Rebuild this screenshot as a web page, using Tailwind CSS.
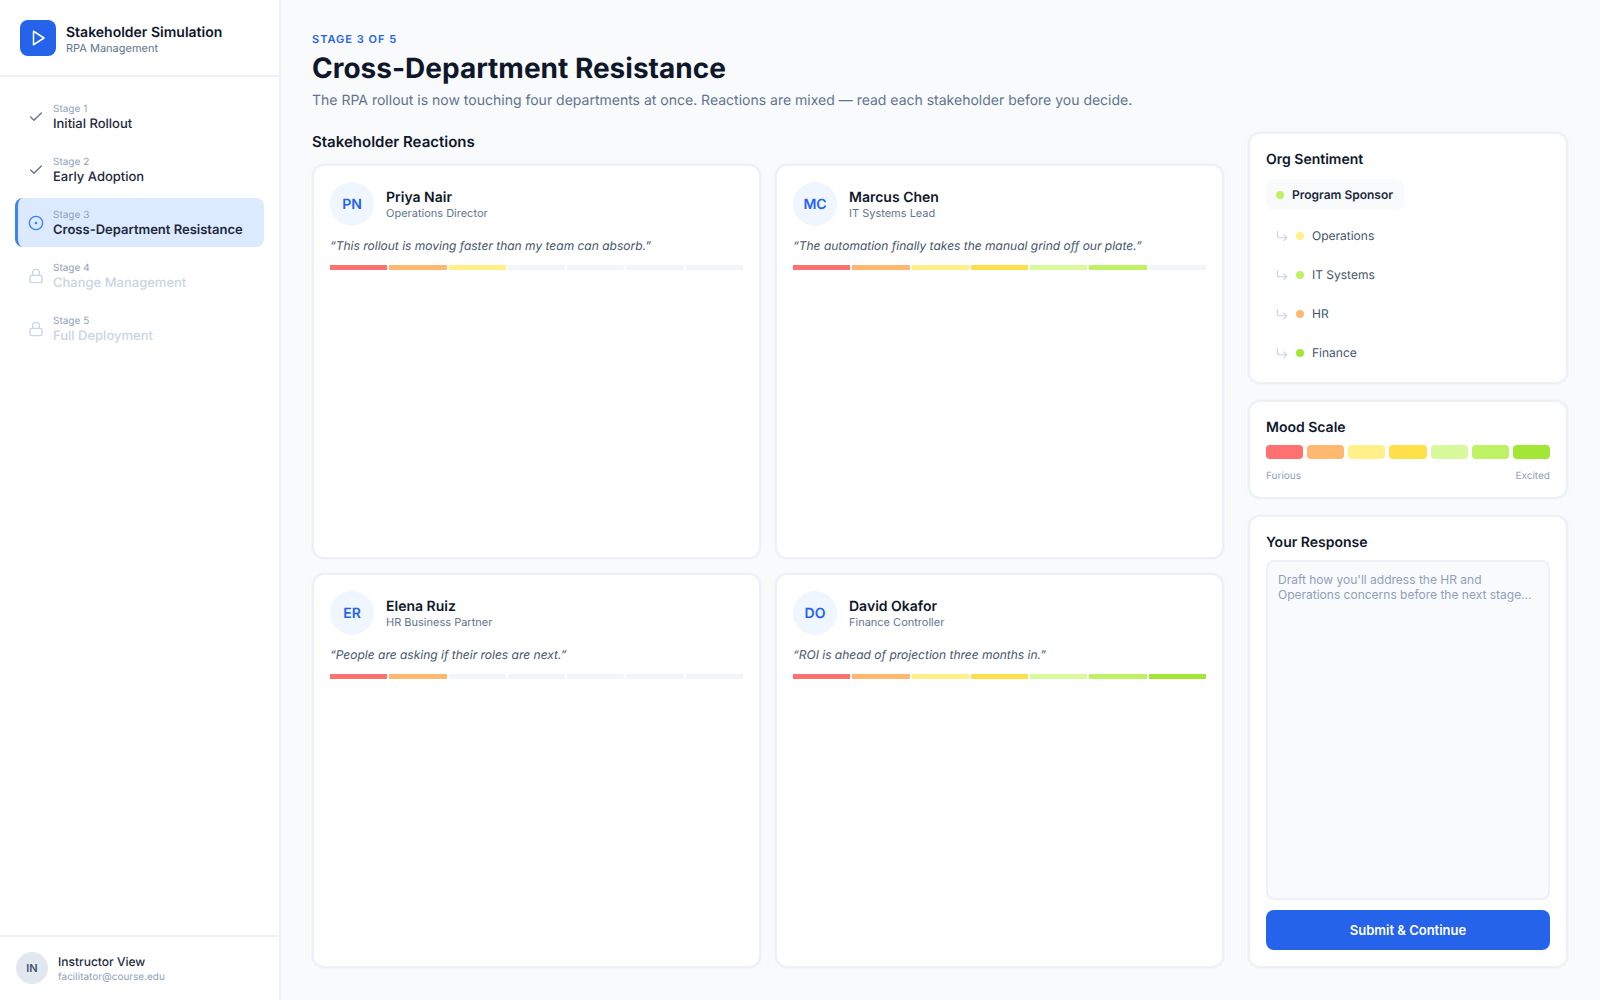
<!DOCTYPE html>
<html lang="en">
<head>
  <meta charset="UTF-8" />
  <title>Stakeholder Simulation</title>
  <script src="https://cdn.jsdelivr.net/npm/@tailwindcss/browser@4"></script>
</head>
<body class="h-[1000px] overflow-hidden bg-slate-50 font-['Inter',sans-serif] text-slate-900 [text-rendering:geometricPrecision]">
<div class="flex h-full">

  <!-- Sidebar -->
  <aside class="flex w-[281px] shrink-0 flex-col border-r-2 border-[#edf1f6] bg-white">
    <div class="flex h-[77px] items-start gap-2.5 border-b-2 border-[#edf1f6] pt-5 pl-5">
      <div class="flex size-9 items-center justify-center rounded-lg bg-[#2563eb]">
        <svg class="size-[18px]" viewBox="0 0 24 24" fill="none" stroke="white" stroke-width="2" stroke-linecap="round" stroke-linejoin="round"><polygon points="6 3 20 12 6 21 6 3"/></svg>
      </div>
      <div class="pt-1">
        <div class="text-sm leading-[18px] font-semibold">Stakeholder Simulation</div>
        <div class="text-[11px] leading-3 text-slate-500">RPA Management</div>
      </div>
    </div>

    <nav class="flex flex-1 flex-col gap-1 px-[15px] pt-[15px]">
      <div class="flex h-[49px] items-center gap-[9px] pl-[13px]">
        <svg class="size-4 shrink-0 text-slate-500" viewBox="0 0 24 24" fill="none" stroke="currentColor" stroke-width="2" stroke-linecap="round" stroke-linejoin="round"><path d="M20 6 9 17l-5-5"/></svg>
        <div class="pt-0.5"><div class="text-[10px] leading-[14px] text-slate-400">Stage 1</div><div class="text-[13px] leading-[17px] font-medium text-slate-800">Initial Rollout</div></div>
      </div>
      <div class="flex h-[49px] items-center gap-[9px] pl-[13px]">
        <svg class="size-4 shrink-0 text-slate-500" viewBox="0 0 24 24" fill="none" stroke="currentColor" stroke-width="2" stroke-linecap="round" stroke-linejoin="round"><path d="M20 6 9 17l-5-5"/></svg>
        <div class="pt-0.5"><div class="text-[10px] leading-[14px] text-slate-400">Stage 2</div><div class="text-[13px] leading-[17px] font-medium text-slate-800">Early Adoption</div></div>
      </div>
      <div class="flex h-[49px] items-center gap-[9px] rounded-lg border-l-[3px] border-[#3b82f6] bg-[#dbeafe] pl-[10px]">
        <svg class="size-4 shrink-0 text-[#3b82f6]" viewBox="0 0 24 24" fill="none" stroke="currentColor" stroke-width="2" stroke-linecap="round" stroke-linejoin="round"><circle cx="12" cy="12" r="10"/><circle cx="12" cy="12" r="1"/></svg>
        <div class="pt-0.5"><div class="text-[10px] leading-[14px] text-slate-400">Stage 3</div><div class="text-[13px] leading-[17px] font-semibold text-slate-800">Cross-Department Resistance</div></div>
      </div>
      <div class="flex h-[49px] items-center gap-[9px] pl-[13px]">
        <svg class="size-4 shrink-0 text-slate-300" viewBox="0 0 24 24" fill="none" stroke="currentColor" stroke-width="2" stroke-linecap="round" stroke-linejoin="round"><rect x="3" y="11" width="18" height="11" rx="2"/><path d="M7 11V7a5 5 0 0 1 10 0v4"/></svg>
        <div class="pt-0.5"><div class="text-[10px] leading-[14px] text-slate-400">Stage 4</div><div class="text-[13px] leading-[17px] font-medium text-slate-300">Change Management</div></div>
      </div>
      <div class="flex h-[49px] items-center gap-[9px] pl-[13px]">
        <svg class="size-4 shrink-0 text-slate-300" viewBox="0 0 24 24" fill="none" stroke="currentColor" stroke-width="2" stroke-linecap="round" stroke-linejoin="round"><rect x="3" y="11" width="18" height="11" rx="2"/><path d="M7 11V7a5 5 0 0 1 10 0v4"/></svg>
        <div class="pt-0.5"><div class="text-[10px] leading-[14px] text-slate-400">Stage 5</div><div class="text-[13px] leading-[17px] font-medium text-slate-300">Full Deployment</div></div>
      </div>
    </nav>

    <div class="flex h-[65px] items-center gap-2.5 border-t-2 border-[#edf1f6] pb-px pl-4">
      <div class="flex size-8 items-center justify-center rounded-full bg-slate-200 text-[11px] font-semibold text-slate-600">IN</div>
      <div class="pt-0.5">
        <div class="text-xs leading-4 font-medium text-slate-800">Instructor View</div>
        <div class="text-[10px] leading-[14px] text-slate-400">facilitator@course.edu</div>
      </div>
    </div>
  </aside>

  <!-- Main -->
  <main class="flex min-w-0 flex-1 flex-col pt-8 pr-8 pb-8 pl-[31px]">
    <div class="text-[11px] leading-[14px] font-semibold tracking-[1px] text-[#2563eb]">STAGE 3 OF 5</div>
    <h1 class="mt-1 text-[28px] leading-[36px] font-bold">Cross-Department Resistance</h1>
    <p class="mt-[5px] text-sm leading-5 text-slate-500">The RPA rollout is now touching four departments at once. Reactions are mixed — read each stakeholder before you decide.</p>

    <div class="mt-[21px] flex min-h-0 flex-1 gap-6">
      <section class="flex min-w-0 flex-1 flex-col">
        <h2 class="mb-3 text-[15px] leading-5 font-semibold">Stakeholder Reactions</h2>
        <div class="grid min-h-0 flex-1 grid-cols-2 grid-rows-2 gap-3.5">

          <div class="rounded-xl border-2 border-[#edf1f6] bg-white p-4 shadow-[0_0_0_1px_#f3f6fa]">
            <div class="flex h-11 items-start gap-3">
              <div class="flex size-11 items-center justify-center rounded-full bg-[#eff6ff] pt-0.5 text-sm font-semibold text-[#2563eb]">PN</div>
              <div class="pt-[7px]"><div class="text-sm leading-[18px] font-semibold">Priya Nair</div><div class="-mt-px text-[11px] leading-[14px] text-slate-500">Operations Director</div></div>
            </div>
            <p class="mt-[11px] text-xs leading-[18px] text-slate-600 italic">“This rollout is moving faster than my team can absorb.”</p>
            <div class="mt-[10px] flex h-[5px] gap-0.5">
              <i class="flex-1 bg-[#ff7070]"></i><i class="flex-1 bg-[#ffb870]"></i><i class="flex-1 bg-[#fff08a]"></i><i class="flex-1 bg-slate-100"></i><i class="flex-1 bg-slate-100"></i><i class="flex-1 bg-slate-100"></i><i class="flex-1 bg-slate-100"></i>
            </div>
          </div>

          <div class="rounded-xl border-2 border-[#edf1f6] bg-white p-4 shadow-[0_0_0_1px_#f3f6fa]">
            <div class="flex h-11 items-start gap-3">
              <div class="flex size-11 items-center justify-center rounded-full bg-[#eff6ff] pt-0.5 text-sm font-semibold text-[#2563eb]">MC</div>
              <div class="pt-[7px]"><div class="text-sm leading-[18px] font-semibold">Marcus Chen</div><div class="-mt-px text-[11px] leading-[14px] text-slate-500">IT Systems Lead</div></div>
            </div>
            <p class="mt-[11px] text-xs leading-[18px] text-slate-600 italic">“The automation finally takes the manual grind off our plate.”</p>
            <div class="mt-[10px] flex h-[5px] gap-0.5">
              <i class="flex-1 bg-[#ff7070]"></i><i class="flex-1 bg-[#ffb870]"></i><i class="flex-1 bg-[#fff08a]"></i><i class="flex-1 bg-[#ffe04a]"></i><i class="flex-1 bg-[#d9f99d]"></i><i class="flex-1 bg-[#bef264]"></i><i class="flex-1 bg-slate-100"></i>
            </div>
          </div>

          <div class="rounded-xl border-2 border-[#edf1f6] bg-white p-4 shadow-[0_0_0_1px_#f3f6fa]">
            <div class="flex h-11 items-start gap-3">
              <div class="flex size-11 items-center justify-center rounded-full bg-[#eff6ff] pt-0.5 text-sm font-semibold text-[#2563eb]">ER</div>
              <div class="pt-[7px]"><div class="text-sm leading-[18px] font-semibold">Elena Ruiz</div><div class="-mt-px text-[11px] leading-[14px] text-slate-500">HR Business Partner</div></div>
            </div>
            <p class="mt-[11px] text-xs leading-[18px] text-slate-600 italic">“People are asking if their roles are next.”</p>
            <div class="mt-[10px] flex h-[5px] gap-0.5">
              <i class="flex-1 bg-[#ff7070]"></i><i class="flex-1 bg-[#ffb870]"></i><i class="flex-1 bg-slate-100"></i><i class="flex-1 bg-slate-100"></i><i class="flex-1 bg-slate-100"></i><i class="flex-1 bg-slate-100"></i><i class="flex-1 bg-slate-100"></i>
            </div>
          </div>

          <div class="rounded-xl border-2 border-[#edf1f6] bg-white p-4 shadow-[0_0_0_1px_#f3f6fa]">
            <div class="flex h-11 items-start gap-3">
              <div class="flex size-11 items-center justify-center rounded-full bg-[#eff6ff] pt-0.5 text-sm font-semibold text-[#2563eb]">DO</div>
              <div class="pt-[7px]"><div class="text-sm leading-[18px] font-semibold">David Okafor</div><div class="-mt-px text-[11px] leading-[14px] text-slate-500">Finance Controller</div></div>
            </div>
            <p class="mt-[11px] text-xs leading-[18px] text-slate-600 italic">“ROI is ahead of projection three months in.”</p>
            <div class="mt-[10px] flex h-[5px] gap-0.5">
              <i class="flex-1 bg-[#ff7070]"></i><i class="flex-1 bg-[#ffb870]"></i><i class="flex-1 bg-[#fff08a]"></i><i class="flex-1 bg-[#ffe04a]"></i><i class="flex-1 bg-[#d9f99d]"></i><i class="flex-1 bg-[#bef264]"></i><i class="flex-1 bg-[#a3e635]"></i>
            </div>
          </div>

        </div>
      </section>

      <!-- Right column -->
      <aside class="flex w-80 shrink-0 flex-col gap-4">
        <div class="rounded-xl border-2 border-[#edf1f6] bg-white px-4 pt-4 pb-[10px] shadow-[0_0_0_1px_#f3f6fa]">
          <h3 class="text-sm leading-5 font-semibold">Org Sentiment</h3>
          <div class="mt-[9px] inline-flex h-[31px] items-center gap-2 rounded-lg bg-slate-50 pr-[11px] pl-2.5 align-top text-xs font-semibold text-slate-800">
            <span class="size-2 rounded-full bg-[#bef264]"></span>Program Sponsor
          </div>
          <div class="mt-1.5 flex flex-col text-xs text-slate-600">
            <div class="flex h-[39px] items-center gap-2 pl-[9px]">
              <svg class="size-3.5 text-slate-300" viewBox="0 0 24 24" fill="none" stroke="currentColor" stroke-width="2" stroke-linecap="round" stroke-linejoin="round"><path d="M4 4v7a4 4 0 0 0 4 4h12"/><path d="m15 10 5 5-5 5"/></svg>
              <span class="-ml-px size-2 rounded-full bg-[#fff08a]"></span><span>Operations</span>
            </div>
            <div class="flex h-[39px] items-center gap-2 pl-[9px]">
              <svg class="size-3.5 text-slate-300" viewBox="0 0 24 24" fill="none" stroke="currentColor" stroke-width="2" stroke-linecap="round" stroke-linejoin="round"><path d="M4 4v7a4 4 0 0 0 4 4h12"/><path d="m15 10 5 5-5 5"/></svg>
              <span class="-ml-px size-2 rounded-full bg-[#bef264]"></span><span>IT Systems</span>
            </div>
            <div class="flex h-[39px] items-center gap-2 pl-[9px]">
              <svg class="size-3.5 text-slate-300" viewBox="0 0 24 24" fill="none" stroke="currentColor" stroke-width="2" stroke-linecap="round" stroke-linejoin="round"><path d="M4 4v7a4 4 0 0 0 4 4h12"/><path d="m15 10 5 5-5 5"/></svg>
              <span class="-ml-px size-2 rounded-full bg-[#ffb870]"></span><span>HR</span>
            </div>
            <div class="flex h-[39px] items-center gap-2 pl-[9px]">
              <svg class="size-3.5 text-slate-300" viewBox="0 0 24 24" fill="none" stroke="currentColor" stroke-width="2" stroke-linecap="round" stroke-linejoin="round"><path d="M4 4v7a4 4 0 0 0 4 4h12"/><path d="m15 10 5 5-5 5"/></svg>
              <span class="-ml-px size-2 rounded-full bg-[#a3e635]"></span><span>Finance</span>
            </div>
          </div>
        </div>

        <div class="rounded-xl border-2 border-[#edf1f6] bg-white px-4 pt-4 pb-3.5 shadow-[0_0_0_1px_#f3f6fa]">
          <h3 class="text-sm leading-5 font-semibold">Mood Scale</h3>
          <div class="mt-[7px] flex h-3.5 gap-1">
            <i class="flex-1 rounded-sm bg-[#ff7070]"></i><i class="flex-1 rounded-sm bg-[#ffb870]"></i><i class="flex-1 rounded-sm bg-[#fff08a]"></i><i class="flex-1 rounded-sm bg-[#ffe04a]"></i><i class="flex-1 rounded-sm bg-[#d9f99d]"></i><i class="flex-1 rounded-sm bg-[#bef264]"></i><i class="flex-1 rounded-sm bg-[#a3e635]"></i>
          </div>
          <div class="mt-2.5 flex justify-between text-[10px] leading-[14px] text-slate-400"><span>Furious</span><span>Excited</span></div>
        </div>

        <div class="flex min-h-0 flex-1 flex-col rounded-xl border-2 border-[#edf1f6] bg-white p-4 shadow-[0_0_0_1px_#f3f6fa]">
          <h3 class="text-sm leading-5 font-semibold">Your Response</h3>
          <textarea class="mt-[7px] min-h-0 flex-1 resize-none rounded-lg border-2 border-[#edf1f6] bg-slate-50 p-2.5 text-xs leading-[15px] placeholder:text-slate-400" placeholder="Draft how you'll address the HR and Operations concerns before the next stage..."></textarea>
          <button class="mt-2.5 h-10 rounded-lg bg-[#2563eb] pt-0.5 text-[13px] font-semibold text-white">Submit &amp; Continue</button>
        </div>
      </aside>
    </div>
  </main>
</div>
</body>
</html>
